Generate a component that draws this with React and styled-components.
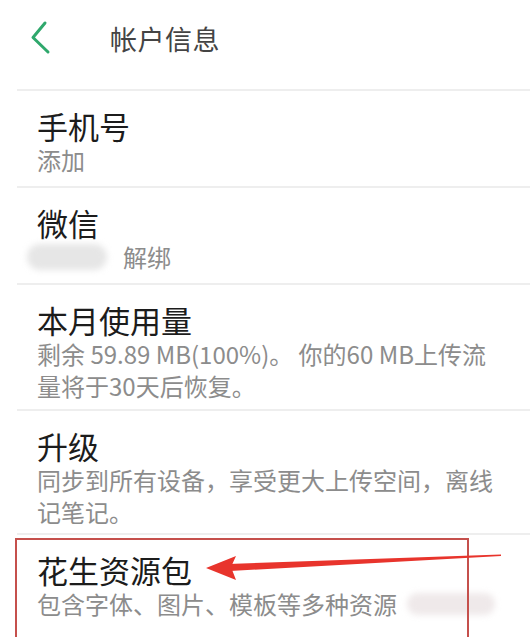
import React from 'react'
import styled, { createGlobalStyle } from 'styled-components'

const Global = createGlobalStyle`
  html, body {
    margin: 0;
    padding: 0;
    background: #fff;
  }
  body {
    font-family: "Noto Sans CJK SC", "Noto Sans", sans-serif;
  }
`

const Page = styled.div`
  width: 530px;
  height: 637px;
  overflow: hidden;
  background: #fff;
`

const Header = styled.div`
  height: 70px;
  display: flex;
  align-items: flex-start;
  padding: 19px 0 0 30px;
`

const BackIcon = styled.svg`
  width: 22px;
  height: 36px;
`

const HeaderTitle = styled.div`
  margin-left: 58px;
  font-size: 27px;
  line-height: 40px;
  color: #444;
  letter-spacing: 0.5px;
`

const List = styled.div`
  margin-left: 17px;
`

const Item = styled.div`
  position: relative;
  border-top: 2px solid #eeeeee;
  padding: 17px 28px ${p => p.$pb || 10}px 20px;
`

const Title = styled.div`
  font-size: 31px;
  line-height: 36px;
  color: #1c1c1c;
`

const Sub = styled.div`
  font-size: 24px;
  line-height: 32px;
  color: #8c8c8c;
  display: flex;
  align-items: center;
  flex-wrap: wrap;
`

const Blur = styled.span`
  display: inline-block;
  width: ${p => p.$w}px;
  height: ${p => p.$h}px;
  margin: ${p => p.$m || '0'};
  border-radius: 14px;
  background: ${p => p.$bg || '#e6e6e6'};
  filter: blur(3px);
`

const Highlight = styled.div`
  position: absolute;
  left: -2px;
  top: 3px;
  width: 450px;
  height: 98px;
  border: 2px solid #c5504c;
  pointer-events: none;
`

const Arrow = styled.svg`
  position: absolute;
  left: 0;
  top: 0;
  width: 513px;
  height: 104px;
  overflow: visible;
`

export default function App() {
  return (
    <Page>
      <Global />
      <Header>
        <BackIcon viewBox="0 0 22 36">
          <polyline points="15,4 3,18.5 18,33" fill="none" stroke="#2fa86c" strokeWidth="3" strokeLinecap="round" strokeLinejoin="round" />
        </BackIcon>
        <HeaderTitle>帐户信息</HeaderTitle>
      </Header>
      <List>
        <Item>
          <Title>手机号</Title>
          <Sub>添加</Sub>
        </Item>
        <Item>
          <Title>微信</Title>
          <Sub>
            <Blur $w={80} $h={26} $m="0 16px 0 -10px" />
            解绑
          </Sub>
        </Item>
        <Item $pb={7}>
          <Title>本月使用量</Title>
          <Sub>剩余 59.89 MB(100%)。 你的60 MB上传流量将于30天后恢复。</Sub>
        </Item>
        <Item $pb={5}>
          <Title>升级</Title>
          <Sub>同步到所有设备，享受更大上传空间，离线记笔记。</Sub>
        </Item>
        <Item $pb={20}>
          <Title>花生资源包</Title>
          <Sub>
            包含字体、图片、模板等多种资源
            <Blur $w={88} $h={22} $m="0 0 0 10px" $bg="#efe9ea" />
          </Sub>
          <Highlight />
          <Arrow viewBox="0 0 513 104">
            <polygon points="211,29 484,19.5 484,21 213,36" fill="#e8342c" />
            <polygon points="189,33 219,21 214,32 219,45" fill="#e8342c" />
          </Arrow>
        </Item>
      </List>
    </Page>
  )
}
